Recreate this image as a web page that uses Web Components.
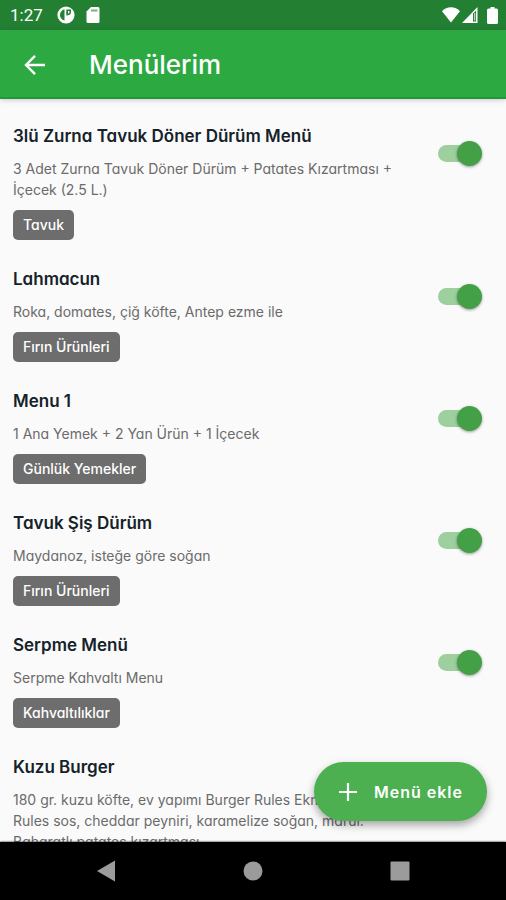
<!DOCTYPE html>
<html lang="tr">
<head>
<meta charset="utf-8">
<meta name="viewport" content="width=device-width, initial-scale=1">
<title>Menülerim</title>
<style>
  body { margin: 0; font-family: Inter, "Open Sans", "Liberation Sans", sans-serif; font-feature-settings: "cv11"; }
</style>
</head>
<body>
<menu-app></menu-app>

<script>
const define = (name, html, setup) => {
  const template = document.createElement('template');
  template.innerHTML = html;
  customElements.define(name, class extends HTMLElement {
    constructor() {
      super();
      this.attachShadow({ mode: 'open' }).append(template.content.cloneNode(true));
    }
    connectedCallback() { if (setup) setup(this, this.shadowRoot); }
  });
};

define('status-bar', `
<style>
  :host { display: flex; align-items: center; height: 30px; padding: 0 8px 0 10px; background: #237f32; color: #fff; font: 17px/30px Roboto, sans-serif; }
  .clock { margin-right: 14px; }
  .left { display: flex; gap: 11px; flex: 1; }
  .right { display: flex; align-items: center; gap: 2px; }
  svg { display: block; fill: #fff; }
  .battery { margin-left: 7px; }
</style>
<span class="clock">1:27</span>
<div class="left">
  <svg width="18" height="18" viewBox="0 0 18 18"><circle cx="9" cy="9" r="8.600"/><path fill="#237f32" d="M7.500 3.200V14.600C4.800 13.800 3 11.800 3 9C3 6.200 4.800 4 7.500 3.200ZM9.300 3.600H14V6.300C14 8.500 12 9.600 9.300 9.600Z"/><path d="M11 5H12.500V6.500Q12.500 7.500 11 7.800Z"/></svg>
  <svg width="14" height="18" viewBox="0 0 14 18"><path d="M5 1H12Q13.500 1 13.500 2.500V15.500Q13.500 17 12 17H2Q.5 17 .5 15.500V5.500Z"/><path fill="#7cae84" d="M5 3.500H11.500V5.500H5Z"/></svg>
</div>
<div class="right">
  <svg width="18" height="16" viewBox="0 0 18 16"><path d="M0 4.200C2.300 1.700 5.500.3 9 .3S15.700 1.700 18 4.200L9 15.500Z"/></svg>
  <svg width="16" height="16" viewBox="0 0 16 16"><path fill-rule="evenodd" d="M15.500 0V16H0ZM11 6.500V14.500H14V3.700Z"/><path d="M12.300 6H13.200V13.500H12.300Z"/></svg>
  <svg class="battery" width="11" height="17" viewBox="0 0 11 17"><path d="M3.500 0H7.500V1.500H9.500Q11 1.500 11 3V15.500Q11 17 9.500 17H1.500Q0 17 0 15.500V3Q0 1.500 1.500 1.500H3.500Z"/></svg>
</div>`);

define('app-bar', `
<style>
  :host { display: flex; align-items: center; gap: 41px; height: 69px; padding: 2px 22px 0; box-sizing: border-box; background: #2da941; color: #fff; border-bottom: 2px solid #1f9a35; box-shadow: 0 1px 5px rgba(60, 40, 90, .25); position: relative; }
  button { display: block; padding: 0; border: 0; background: none; color: inherit; }
  svg { display: block; }
  h1 { margin: 0; font-size: 26px; line-height: 32px; font-weight: 500; }
</style>
<button aria-label="Geri"><svg width="26" height="26" viewBox="0 0 26 26" fill="none" stroke="currentColor" stroke-width="2.400"><path d="M23 13H4.500M13 3.800L4 13L13 22.200"/></svg></button>
<h1><slot></slot></h1>`);

define('toggle-switch', `
<style>
  :host { display: block; }
  input { appearance: none; display: grid; align-items: center; width: 44px; height: 25px; margin: 0; }
  input::before, input::after { content: ""; grid-area: 1 / 1; }
  input::before { width: 42px; height: 17px; border-radius: 9px; background: #bbb; }
  input::after { width: 25px; height: 25px; border-radius: 50%; background: #f1f1f1; box-shadow: 0 1px 3px rgba(0, 0, 0, .4); }
  input:checked::before { background: #9dcf9f; }
  input:checked::after { background: #43a047; justify-self: end; }
</style>
<input type="checkbox" role="switch" checked>`, (host, root) => {
  root.querySelector('input').setAttribute('aria-label', host.getAttribute('label'));
});

define('menu-item', `
<style>
  :host { display: flex; align-items: flex-start; gap: 20px; }
  .text { flex: 1; min-width: 0; display: flex; flex-direction: column; align-items: flex-start; gap: 10px; }
  h2 { margin: 0; font-size: 17px; line-height: 24px; font-weight: 600; color: #15222a; }
  p { margin: 0; font-size: 14px; line-height: 21px; color: #6b6b6b; }
  .tag { padding: 0 10px; border-radius: 5px; background: #6d6d6d; color: #fff; font-size: 14px; line-height: 30px; font-weight: 500; }
  .tag:empty { display: none; }
  toggle-switch { margin-top: 17px; }
</style>
<div class="text">
  <h2></h2>
  <p><slot></slot></p>
  <span class="tag"></span>
</div>
<toggle-switch></toggle-switch>`, (host, root) => {
  const name = host.getAttribute('name');
  root.querySelector('h2').textContent = name;
  root.querySelector('.tag').textContent = host.getAttribute('tag') || '';
  root.querySelector('toggle-switch').setAttribute('label', name);
});

define('add-button', `
<style>
  :host { display: block; }
  button { display: flex; align-items: center; gap: 14px; height: 59px; padding: 0 24px 0 22px; border: 0; border-radius: 30px; background: #4caf50; color: #fff; font: inherit; font-size: 16px; font-weight: 600; letter-spacing: 1px; box-shadow: 0 4px 8px rgba(0, 0, 0, .35); white-space: nowrap; }
  svg { display: block; }
</style>
<button><svg width="24" height="24" viewBox="0 0 24 24" stroke="currentColor" stroke-width="2.200"><path d="M3 12H21M12 3V21"/></svg><slot></slot></button>`);

define('nav-bar', `
<style>
  :host { display: flex; height: 58px; padding: 0 33px; background: #000; box-shadow: 0 0 2px #000; position: relative; }
  button { flex: 1; display: grid; place-items: center; padding: 0; border: 0; background: none; }
  svg { display: block; fill: #9b9b9b; }
</style>
<button aria-label="Geri"><svg width="22" height="22" viewBox="0 0 22 22"><path d="M20 .5V21.500L2 11Z"/></svg></button>
<button aria-label="Ana ekran"><svg width="22" height="22" viewBox="0 0 22 22"><circle cx="11" cy="11" r="9.500"/></svg></button>
<button aria-label="Son uygulamalar"><svg width="22" height="22" viewBox="0 0 22 22"><rect x="1.500" y="1.500" width="19" height="19" rx="1"/></svg></button>`);

define('menu-app', `
<style>
  :host { display: flex; flex-direction: column; height: 100vh; background: #fafafa; }
  status-bar, app-bar, nav-bar { flex: none; }
  main { flex: 1; min-height: 0; position: relative; overflow: hidden; }
  .list { display: flex; flex-direction: column; gap: 27px; padding: 25px 24px 0 13px; }
  add-button { position: absolute; right: 19px; bottom: 21px; }
</style>
<status-bar></status-bar>
<app-bar>Menülerim</app-bar>
<main>
  <div class="list">
    <menu-item name="3lü Zurna Tavuk Döner Dürüm Menü" tag="Tavuk">3 Adet Zurna Tavuk Döner Dürüm + Patates Kızartması + İçecek (2.5 L.)</menu-item>
    <menu-item name="Lahmacun" tag="Fırın Ürünleri">Roka, domates, çiğ köfte, Antep ezme ile</menu-item>
    <menu-item name="Menu 1" tag="Günlük Yemekler">1 Ana Yemek + 2 Yan Ürün + 1 İçecek</menu-item>
    <menu-item name="Tavuk Şiş Dürüm" tag="Fırın Ürünleri">Maydanoz, isteğe göre soğan</menu-item>
    <menu-item name="Serpme Menü" tag="Kahvaltılıklar">Serpme Kahvaltı Menu</menu-item>
    <menu-item name="Kuzu Burger">180 gr. kuzu köfte, ev yapımı Burger Rules Ekmeği,<br>Rules sos, cheddar peyniri, karamelize soğan, marul.<br>Baharatlı patates kızartması.</menu-item>
  </div>
  <add-button>Menü ekle</add-button>
</main>
<nav-bar></nav-bar>`);
</script>
</body>
</html>
